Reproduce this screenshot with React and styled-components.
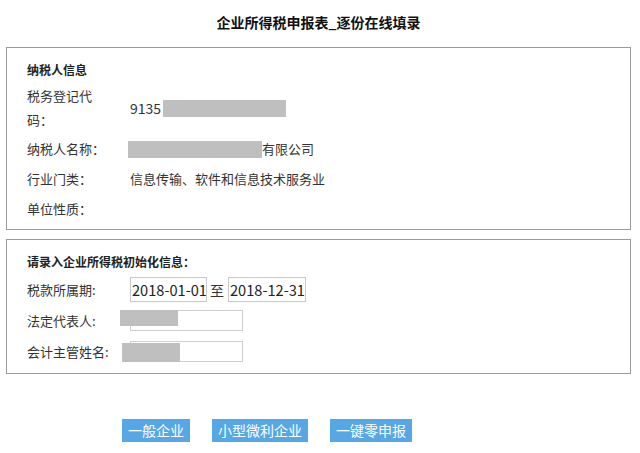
import React from 'react';
import styled, { createGlobalStyle } from 'styled-components';

const Global = createGlobalStyle`
  html, body { margin: 0; padding: 0; background: #fff; }
  body {
    font-family: "Noto Sans CJK SC", "Microsoft YaHei", sans-serif;
    color: #333;
  }
  * { box-sizing: border-box; }
`;

const Page = styled.div`
  width: 640px;
  height: 453px;
  overflow: hidden;
  padding: 0 9px 0 6px;
`;

const Title = styled.h1`
  margin: 0;
  height: 47px;
  line-height: 44px;
  text-align: center;
  font-size: 14px;
  font-weight: bold;
  color: #111;
`;

const Panel = styled.section`
  border: 1px solid #9a9a9a;
  padding: 10px 20px ${(p) => p.$pb}px;
  margin-bottom: ${(p) => p.$mb}px;
`;

const Heading = styled.div`
  font-size: 12px;
  font-weight: bold;
  line-height: 24px;
  color: #222;
`;

const InfoRow = styled.div`
  display: grid;
  grid-template-columns: 84px 1fr;
  column-gap: 19px;
  align-items: center;
  min-height: 30px;
  padding: 2px 0;
  font-size: 13px;
`;

const Label = styled.div`
  line-height: 24px;
  color: #333;
`;

const Value = styled.div`
  display: flex;
  align-items: center;
  line-height: 24px;
  color: #333;
`;

const Digits = styled.span`
  font-size: 14px;
`;

const Redact = styled.span`
  display: inline-block;
  width: ${(p) => p.$w}px;
  height: ${(p) => p.$h}px;
  background: #bfbfbf;
  margin-left: ${(p) => p.$ml || 0}px;
`;

const FormRow = styled.div`
  display: grid;
  grid-template-columns: 84px 1fr;
  column-gap: 19px;
  align-items: center;
  height: 31px;
  font-size: 13px;
`;

const Inline = styled.div`
  display: flex;
  align-items: center;
`;

const DateInput = styled.input`
  width: ${(p) => p.$w}px;
  height: 25px;
  border: 1px solid #c9c9c9;
  padding: 0 0 0 1px;
  margin: 0;
  font-family: "Noto Sans CJK SC", sans-serif;
  font-size: 14.6px;
  color: #222;
  background: #fff;
  outline: none;
`;

const To = styled.span`
  margin: 0 4px 0 3px;
  font-size: 14px;
  color: #333;
`;

const Field = styled.div`
  position: relative;
  width: 113px;
  height: 21px;
`;

const TextInput = styled.input`
  width: 113px;
  height: 21px;
  border: 1px solid #cfcfcf;
  margin: 0;
  padding: 0;
  background: #fff;
  outline: none;
`;

const Cover = styled.span`
  position: absolute;
  left: ${(p) => p.$l}px;
  top: ${(p) => p.$t}px;
  width: 58px;
  height: ${(p) => p.$h}px;
  background: #bfbfbf;
`;

const ButtonRow = styled.div`
  display: flex;
  gap: 22px;
  padding-left: 116px;
`;

const Button = styled.button`
  height: 23px;
  padding: 0 6px;
  border: none;
  background: #56a7e6;
  color: #fff;
  font-family: "Noto Sans CJK SC", sans-serif;
  font-size: 14px;
  line-height: 23px;
  cursor: pointer;
`;

export default function App() {
  return (
    <Page>
      <Global />
      <Title>企业所得税申报表_逐份在线填录</Title>

      <Panel $pb={5} $mb={9}>
        <Heading>纳税人信息</Heading>
        <InfoRow>
          <Label>税务登记代码：</Label>
          <Value>
            <Digits>9135</Digits>
            <Redact $w={123} $h={17} $ml={2} />
          </Value>
        </InfoRow>
        <InfoRow>
          <Label>纳税人名称：</Label>
          <Value>
            <Redact $w={134} $h={17} $ml={-2} />
            有限公司
          </Value>
        </InfoRow>
        <InfoRow>
          <Label>行业门类：</Label>
          <Value>信息传输、软件和信息技术服务业</Value>
        </InfoRow>
        <InfoRow>
          <Label>单位性质：</Label>
          <Value />
        </InfoRow>
      </Panel>

      <Panel $pb={6} $mb={45}>
        <Heading>请录入企业所得税初始化信息：</Heading>
        <FormRow>
          <Label>税款所属期:</Label>
          <Inline>
            <DateInput $w={77} readOnly defaultValue="2018-01-01" />
            <To>至</To>
            <DateInput $w={78} readOnly defaultValue="2018-12-31" />
          </Inline>
        </FormRow>
        <FormRow>
          <Label>法定代表人:</Label>
          <Field>
            <TextInput readOnly />
            <Cover $l={-10} $t={0} $h={16} />
          </Field>
        </FormRow>
        <FormRow>
          <Label>会计主管姓名:</Label>
          <Field>
            <TextInput readOnly />
            <Cover $l={-8} $t={2} $h={19} />
          </Field>
        </FormRow>
      </Panel>

      <ButtonRow>
        <Button>一般企业</Button>
        <Button>小型微利企业</Button>
        <Button>一键零申报</Button>
      </ButtonRow>
    </Page>
  );
}
